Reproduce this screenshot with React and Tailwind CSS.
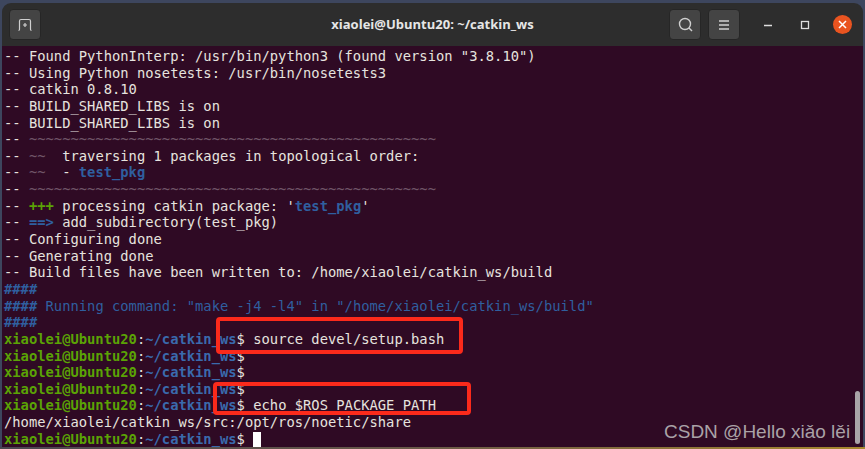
const PROMPT_GREEN = 'text-[#5ba305]';
const DIR_BLUE = 'text-[#3a6aad]';
const BLUE = 'text-[#2f5f9f]';
const DIM = 'text-[#6f5568]';

function Prompt() {
  return (
    <>
      <span className={`font-bold ${PROMPT_GREEN}`}>xiaolei@Ubuntu20</span>
      <span>:</span>
      <span className={`font-bold ${DIR_BLUE}`}>~/catkin_ws</span>
      <span>$</span>
    </>
  );
}

const tildes = '~'.repeat(49);

const lines = [
  <>-- Found PythonInterp: /usr/bin/python3 (found version "3.8.10")</>,
  <>-- Using Python nosetests: /usr/bin/nosetests3</>,
  <>-- catkin 0.8.10</>,
  <>-- BUILD_SHARED_LIBS is on</>,
  <>-- BUILD_SHARED_LIBS is on</>,
  <>-- <span className={DIM}>{tildes}</span></>,
  <>-- <span className={DIM}>~~</span>  traversing 1 packages in topological order:</>,
  <>-- <span className={DIM}>~~</span>  - <span className={`font-bold ${BLUE}`}>test_pkg</span></>,
  <>-- <span className={DIM}>{tildes}</span></>,
  <>-- <span className={`font-bold ${PROMPT_GREEN}`}>+++</span> processing catkin package: '<span className={`font-bold ${BLUE}`}>test_pkg</span>'</>,
  <>-- <span className={`font-bold ${BLUE}`}>==&gt;</span> add_subdirectory(test_pkg)</>,
  <>-- Configuring done</>,
  <>-- Generating done</>,
  <>-- Build files have been written to: /home/xiaolei/catkin_ws/build</>,
  <span className={`font-bold ${BLUE}`}>####</span>,
  <span className={BLUE}><span className="font-bold">####</span> Running command: "make -j4 -l4" in "/home/xiaolei/catkin_ws/build"</span>,
  <span className={`font-bold ${BLUE}`}>####</span>,
  <><Prompt /> source devel/setup.bash</>,
  <Prompt />,
  <Prompt />,
  <Prompt />,
  <><Prompt /> echo $ROS_PACKAGE_PATH</>,
  <>/home/xiaolei/catkin_ws/src:/opt/ros/noetic/share</>,
  <><Prompt /> <span className="inline-block h-[16px] w-[8px] bg-white align-[-4px]" /></>,
];

function HeaderButton({ children }) {
  return (
    <div className="flex h-[31px] w-[32px] items-center justify-center rounded-[4px] border border-[#262626] bg-[#444444]">
      {children}
    </div>
  );
}

export default function App() {
  return (
    <div className="flex h-[449px] w-[865px] flex-col overflow-hidden bg-[#3d465e] pl-[2px] pr-[2px] pt-[3px]">
      <div className="flex flex-1 flex-col overflow-hidden rounded-t-[9px] bg-[#2d2d2d]">
        <header className="grid h-[43px] shrink-0 grid-cols-[1fr_auto_1fr] items-center pl-[7px] pr-[11px]">
          <div className="flex">
            <HeaderButton>
              <svg width="16" height="14" viewBox="0 0 16 14" fill="none" stroke="#d0d0d0" strokeWidth="1.2">
                <path d="M1.500 12.500c.8 0 1-.5 1-1.200V3a1.500 1.500 0 0 1 1.500-1.500h8A1.500 1.500 0 0 1 13.500 3v8.300c0 .7.2 1.200 1 1.200" />
                <path d="M8 5v4M6 7h4" />
              </svg>
            </HeaderButton>
          </div>
          <div className="pl-[4px] text-center font-['Open_Sans',sans-serif] text-[13px] font-bold text-[#e6e6e6]">
            xiaolei@Ubuntu20: ~/catkin_ws
          </div>
          <div className="flex items-center justify-end">
            <HeaderButton>
              <svg width="15" height="15" viewBox="0 0 15 15" fill="none" stroke="#cfcfcf" strokeWidth="1.400">
                <circle cx="7" cy="7" r="5.500" />
                <path d="M11 11l3 3" />
              </svg>
            </HeaderButton>
            <div className="ml-[7px]">
              <HeaderButton>
                <svg width="12" height="12" viewBox="0 0 12 12" fill="none" stroke="#cfcfcf" strokeWidth="1.300">
                  <path d="M1 2h10M1 6h10M1 10h10" />
                </svg>
              </HeaderButton>
            </div>
            <svg className="ml-[23px]" width="10" height="10" viewBox="0 0 10 10" fill="none" stroke="#dedede" strokeWidth="1.300">
              <path d="M1 5.500h8" />
            </svg>
            <svg className="ml-[27px]" width="10" height="10" viewBox="0 0 10 10" fill="none" stroke="#dedede" strokeWidth="1.300">
              <rect x="1.500" y="1.500" width="7" height="7" />
            </svg>
            <div className="ml-[23px] flex h-[19px] w-[19px] items-center justify-center rounded-full bg-[#e95420]">
              <svg width="9" height="9" viewBox="0 0 9 9" fill="none" stroke="#ffffff" strokeWidth="1.500">
                <path d="M1 1l7 7M8 1l-7 7" />
              </svg>
            </div>
          </div>
        </header>

        <main className="relative flex-1 overflow-hidden bg-[#2f0a24] pl-[2px] pt-[2px] font-['DejaVu_Sans_Mono',monospace] text-[13.800px] leading-[16.650px] text-[#e6e3df]">
          {lines.map((line, i) => (
            <div key={i} className="h-[16.650px] whitespace-pre">{line}</div>
          ))}

          {/* red annotation boxes */}
          <div className="absolute left-[214px] top-[271px] h-[37px] w-[247px] rounded-[4px] border-[4px] border-[#fb2a1b]" />
          <div className="absolute left-[211px] top-[336px] h-[33px] w-[258px] rounded-[4px] border-[4px] border-[#fb2a1b]" />

          <div className="absolute left-[853px] top-[345px] h-[53px] w-[5px] rounded-full bg-[#a9a4a7]" />
          <div className="absolute left-[662px] top-[375px] font-['Liberation_Sans',sans-serif] text-[19px] leading-[22px] text-[#aaa2a7]">
            CSDN @Hello xiǎo lěi
          </div>
        </main>
      </div>
      <div className="-mx-[2px] h-[2px] shrink-0 bg-[linear-gradient(90deg,#4a4650,#6b5a48_50%,#a8882e)]" />
    </div>
  );
}
